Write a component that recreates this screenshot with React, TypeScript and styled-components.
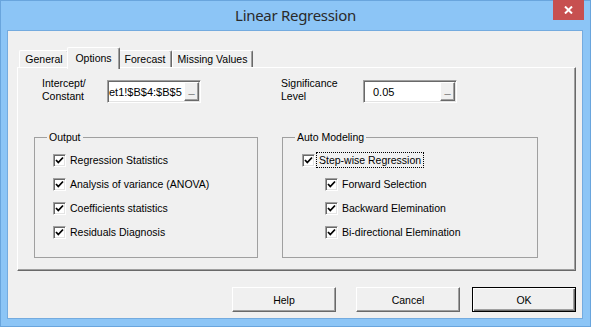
import styled, { createGlobalStyle } from "styled-components";

const GlobalStyle = createGlobalStyle`
    body {
        margin: 0;
        background: #ffffff;
        font-family: "Liberation Sans", Arial, sans-serif;
    }
`;

const Window = styled.div`
    width: 591px;
    height: 327px;
    box-sizing: border-box;
    background-color: #8cc5f6;
    border: 1px solid #69a5dd;
    display: flex;
    flex-direction: column;
`;

const TitleBar = styled.div`
    height: 29px;
    display: grid;
    grid-template-columns: 1fr auto 1fr;
    align-items: start;
`;

const Title = styled.div`
    grid-column: 2;
    font-family: "Noto Sans", "Open Sans", sans-serif;
    font-size: 15px;
    letter-spacing: -0.3px;
    color: #2a2a2a;
    line-height: 29px;
`;

const CloseButton = styled.div`
    grid-column: 3;
    justify-self: end;
    width: 31px;
    height: 20px;
    margin-top: -1px;
    margin-right: 6px;
    background-color: #c75050;
    display: flex;
    align-items: center;
    justify-content: center;
`;

const Client = styled.div`
    margin: 0 7px 7px 6px;
    flex: 1;
    background-color: #f0f0f0;
    border: 1px solid #74abdf;
    display: flex;
    flex-direction: column;
`;

const TabStrip = styled.div`
    display: flex;
    align-items: flex-end;
    height: 20px;
    margin: 16px 0 0 11px;
`;

const Tab = styled.div<{ $active?: boolean; $w: number }>`
    position: relative;
    z-index: ${p => (p.$active ? 1 : 0)};
    box-sizing: border-box;
    width: ${p => p.$w + (p.$active ? 4 : 0)}px;
    height: ${p => (p.$active ? 22 : 17)}px;
    margin: ${p => (p.$active ? "0 -2px -2px -2px" : "0")};
    padding-bottom: ${p => (p.$active ? 2 : 0)}px;
    background-color: #f0f0f0;
    border-top: 1px solid #ffffff;
    border-left: 1px solid #ffffff;
    border-right: 1px solid #696969;
    box-shadow: inset -1px 0 0 #a0a0a0;
    border-radius: 2px 2px 0 0;
    font-size: 10.5px;
    color: #000;
    display: flex;
    align-items: center;
    justify-content: center;
`;

const TabPanel = styled.div`
    margin: 0 6px 0 9px;
    height: 204px;
    box-sizing: border-box;
    border: 1px solid;
    border-color: #ffffff #696969 #696969 #ffffff;
    box-shadow: inset -1px -1px 0 #a0a0a0;
    padding: 12px 0 0 16px;
`;

const PanelGrid = styled.div`
    display: grid;
    grid-template-columns: 224px 256px;
    column-gap: 24px;
    row-gap: 28px;
`;

const Field = styled.div<{ $shift: number }>`
    display: flex;
    align-items: center;
    margin-left: ${p => p.$shift}px;
`;

const FieldLabel = styled.div<{ $w: number }>`
    width: ${p => p.$w}px;
    font-size: 10.5px;
    line-height: 13px;
    margin-top: -3px;
    color: #000;
`;

const TextBox = styled.div`
    width: 94px;
    height: 23px;
    box-sizing: border-box;
    background-color: #ffffff;
    border: 1px solid;
    border-color: #a0a0a0 #ffffff #ffffff #a0a0a0;
    box-shadow: inset 1px 1px 0 #696969, inset -1px -1px 0 #e3e3e3;
    display: flex;
    align-items: center;
    padding: 1px;
`;

const TextValue = styled.div<{ $pad: number }>`
    flex: 1;
    overflow: hidden;
    white-space: nowrap;
    font-size: 11px;
    padding-left: ${p => p.$pad}px;
    color: #000;
`;

const PickButton = styled.div`
    width: 15px;
    height: 19px;
    box-sizing: border-box;
    background-color: #f0f0f0;
    border: 1px solid;
    border-color: #ffffff #696969 #696969 #ffffff;
    box-shadow: inset -1px -1px 0 #a0a0a0;
    font-size: 11px;
    font-weight: bold;
    line-height: 12px;
    text-align: center;
    color: #000;
`;

const GroupBox = styled.fieldset`
    margin: 0;
    min-width: 0;
    height: 127px;
    box-sizing: border-box;
    border: 1px solid #a0a0a0;
    padding: 4px 0 0 18px;
`;

const GroupLegend = styled.legend`
    margin-left: -6px;
    padding: 0 2px;
    font-size: 10.5px;
    line-height: 13px;
    color: #000;
`;

const CheckRow = styled.div<{ $indent?: number }>`
    display: flex;
    align-items: center;
    height: 24px;
    padding-left: ${p => p.$indent ?? 0}px;
`;

const CheckBox = styled.div`
    width: 13px;
    height: 13px;
    box-sizing: border-box;
    background-color: #ffffff;
    border: 1px solid;
    border-color: #a0a0a0 #ffffff #ffffff #a0a0a0;
    box-shadow: inset 1px 1px 0 #696969, inset -1px -1px 0 #e3e3e3;
    display: flex;
    align-items: center;
    justify-content: center;
    flex-shrink: 0;
`;

const CheckLabel = styled.span<{ $focus?: boolean }>`
    font-size: 10.5px;
    color: #000;
    margin-left: ${p => (p.$focus ? 1 : 4)}px;
    padding: ${p => (p.$focus ? "1px 2px" : "0")};
    border: ${p => (p.$focus ? "1px dotted #000" : "none")};
`;

const ButtonRow = styled.div`
    display: flex;
    justify-content: flex-end;
    gap: 12px;
    margin: 16px 6px 0 0;
`;

const DialogButton = styled.button<{ $default?: boolean; $spaced?: boolean }>`
    width: 104px;
    height: 25px;
    box-sizing: border-box;
    margin-right: ${p => (p.$spaced ? 8 : 0)}px;
    background-color: #f0f0f0;
    border: 1px solid;
    border-color: ${p => (p.$default ? "#000" : "#ffffff #696969 #696969 #ffffff")};
    box-shadow: ${p =>
        p.$default
            ? "inset 1px 1px 0 #ffffff, inset -1px -1px 0 #696969, inset -2px -2px 0 #a0a0a0"
            : "inset -1px -1px 0 #a0a0a0"};
    font-family: "Liberation Sans", Arial, sans-serif;
    font-size: 10.5px;
    color: #000;
    padding: 0;
`;

function Check() {
    return (
        <CheckBox>
            <svg width="9" height="9" viewBox="0 0 9 9">
                <path d="M1 4 L3.3 6.5 L8 1.5" fill="none" stroke="#000" strokeWidth="1.8" />
            </svg>
        </CheckBox>
    );
}

const outputItems = [
    "Regression Statistics",
    "Analysis of variance (ANOVA)",
    "Coefficients statistics",
    "Residuals Diagnosis",
];

const modelingItems = ["Forward Selection", "Backward Elemination", "Bi-directional Elemination"];

function App() {
    return (
        <>
            <GlobalStyle />
            <Window>
                <TitleBar>
                    <Title>Linear Regression</Title>
                    <CloseButton>
                        <svg width="9" height="8" viewBox="0 0 9 8">
                            <path d="M1 0.5 L8 7.5 M8 0.5 L1 7.5" stroke="#fff" strokeWidth="2" />
                        </svg>
                    </CloseButton>
                </TitleBar>
                <Client>
                    <TabStrip>
                        <Tab $w={50}>General</Tab>
                        <Tab $w={49} $active>Options</Tab>
                        <Tab $w={54}>Forecast</Tab>
                        <Tab $w={81}>Missing Values</Tab>
                    </TabStrip>
                    <TabPanel>
                        <PanelGrid>
                            <Field $shift={8}>
                                <FieldLabel $w={65}>
                                    Intercept/
                                    <br />
                                    Constant
                                </FieldLabel>
                                <TextBox>
                                    <TextValue $pad={0}>et1!$B$4:$B$5</TextValue>
                                    <PickButton>_</PickButton>
                                </TextBox>
                            </Field>
                            <Field $shift={-1}>
                                <FieldLabel $w={82}>
                                    Significance
                                    <br />
                                    Level
                                </FieldLabel>
                                <TextBox>
                                    <TextValue $pad={8}>0.05</TextValue>
                                    <PickButton>_</PickButton>
                                </TextBox>
                            </Field>
                            <GroupBox>
                                <GroupLegend>Output</GroupLegend>
                                {outputItems.map(item => (
                                    <CheckRow key={item}>
                                        <Check />
                                        <CheckLabel>{item}</CheckLabel>
                                    </CheckRow>
                                ))}
                            </GroupBox>
                            <GroupBox>
                                <GroupLegend>Auto Modeling</GroupLegend>
                                <CheckRow $indent={1}>
                                    <Check />
                                    <CheckLabel $focus>Step-wise Regression</CheckLabel>
                                </CheckRow>
                                {modelingItems.map(item => (
                                    <CheckRow key={item} $indent={24}>
                                        <Check />
                                        <CheckLabel>{item}</CheckLabel>
                                    </CheckRow>
                                ))}
                            </GroupBox>
                        </PanelGrid>
                    </TabPanel>
                    <ButtonRow>
                        <DialogButton $spaced>Help</DialogButton>
                        <DialogButton>Cancel</DialogButton>
                        <DialogButton $default>OK</DialogButton>
                    </ButtonRow>
                </Client>
            </Window>
        </>
    );
}

export default App;
